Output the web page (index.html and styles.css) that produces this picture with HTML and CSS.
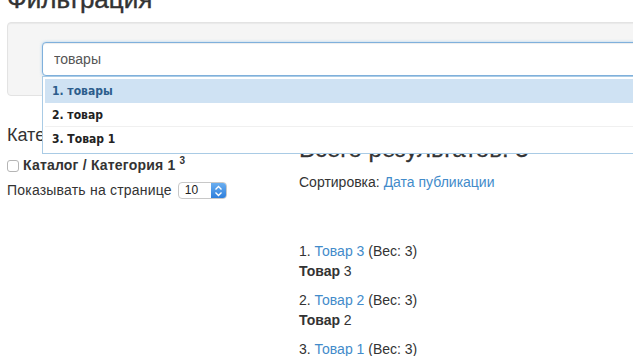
FILE: index.html
```html
<!DOCTYPE html>
<html lang="ru">
<head>
    <meta charset="UTF-8">
    <meta name="viewport" content="width=device-width, initial-scale=1.0">
    <title>Фильтрация</title>
    <link rel="stylesheet" href="styles.css">
</head>
<body>
    <div class="page">
        <h2 class="page-title">Фильтрация</h2>

        <div class="well">
            <div class="search">
                <input type="text" class="search-input" value="товары">
                <ul class="suggest">
                    <li class="active">1. товары</li>
                    <li>2. товар</li>
                    <li>3. Товар 1</li>
                </ul>
            </div>
        </div>

        <div class="row">
            <div class="sidebar">
                <h4>Категории</h4>
                <label class="check">
                    <span class="check-box"></span>
                    <b>Каталог / Категория 1</b> <sup>3</sup>
                </label>
                <div class="per-page">
                    Показывать на странице
                    <span class="select">
                        <span class="select-value">10</span>
                        <span class="select-arrow">
                            <svg width="9" height="12" viewBox="0 0 9 12">
                                <path d="M1.5 4.5 L4.5 1.5 L7.5 4.5 M1.5 7.5 L4.5 10.5 L7.5 7.5" fill="none" stroke="#fff" stroke-width="1.4"/>
                            </svg>
                        </span>
                    </span>
                </div>
            </div>

            <div class="results">
                <h3>Всего результатов: 3</h3>
                <p class="sort">Сортировка: <a href="#">Дата публикации</a></p>

                <div class="result">1. <a href="#">Товар 3</a> (Вес: 3)<br><b>Товар</b> 3</div>
                <div class="result">2. <a href="#">Товар 2</a> (Вес: 3)<br><b>Товар</b> 2</div>
                <div class="result">3. <a href="#">Товар 1</a> (Вес: 3)<br><b>Товар</b> 1</div>
            </div>
        </div>
    </div>
</body>
</html>
```

FILE: styles.css
```css
body {
    margin: 0;
    font-family: "Liberation Sans", Arial, sans-serif;
    font-size: 14px;
    line-height: 20px;
    color: #333;
    background: #fff;
    overflow: hidden;
}

a {
    color: #428bca;
    text-decoration: none;
}

.page {
    width: 760px;
    padding-left: 7px;
}

.page-title {
    font-size: 26px;
    line-height: 30px;
    font-weight: normal;
    -webkit-text-stroke: 0.4px #333;
    margin: -16px 0 8px;
}

.well {
    background: #f5f5f5;
    border: 1px solid #e3e3e3;
    border-radius: 4px;
    box-shadow: inset 0 1px 1px rgba(0,0,0,0.05);
    padding: 19px 0 19px 34px;
    margin-bottom: 19px;
}

.search {
    position: relative;
    width: 680px;
}

.search-input {
    display: block;
    box-sizing: border-box;
    width: 100%;
    height: 34px;
    padding: 6px 11px;
    font-family: "Liberation Sans", Arial, sans-serif;
    font-size: 14px;
    color: #555;
    background: #fff;
    border: 1px solid #7fb0dc;
    border-radius: 4px;
    box-shadow: inset 0 1px 1px rgba(0,0,0,0.075), 0 0 3px rgba(102,175,233,0.5);
    outline: none;
}

.suggest {
    position: absolute;
    top: 34px;
    left: 0;
    right: 0;
    z-index: 10;
    list-style: none;
    margin: 0;
    padding: 2px;
    background: #fff;
    border: 1px solid #a9cbe5;
    font-family: "DejaVu Sans", sans-serif;
    font-stretch: condensed;
    font-size: 12px;
    font-weight: bold;
    color: #222;
}

.suggest li {
    box-sizing: border-box;
    height: 24px;
    line-height: 24px;
    padding-left: 7px;
    border-bottom: 1px solid #f0f0f0;
}

.suggest li:last-child {
    border-bottom: none;
}

.suggest li.active {
    background: #cfe2f3;
    color: #2c5d8c;
    border-bottom-color: #cfe2f3;
}

.row {
    display: grid;
    grid-template-columns: 292px 1fr;
}

.sidebar h4 {
    font-size: 18px;
    line-height: 20px;
    font-weight: normal;
    margin: 10px 0 10px;
}

.check {
    display: flex;
    align-items: center;
    height: 20px;
}

.check-box {
    box-sizing: border-box;
    width: 12px;
    height: 12px;
    border: 1px solid #b5b5b5;
    border-radius: 3px;
    background: #fff;
    margin-right: 4px;
    margin-top: 1px;
}

.check b {
    letter-spacing: 0.2px;
}

.check sup {
    font-size: 10px;
    font-weight: bold;
    line-height: 0;
    margin-left: 4px;
    position: relative;
    top: -4px;
}

.per-page {
    display: flex;
    align-items: center;
    margin-top: 5px;
    height: 20px;
    letter-spacing: 0.2px;
}

.select {
    display: inline-flex;
    box-sizing: border-box;
    width: 49px;
    height: 17px;
    margin-left: 6px;
    margin-top: 1px;
    border: 1px solid #c8c8c8;
    border-radius: 4px;
    background: #fff;
    overflow: hidden;
    letter-spacing: 0;
}

.select-value {
    flex: 1;
    font-size: 12px;
    line-height: 15px;
    padding-left: 6px;
    color: #222;
}

.select-arrow {
    display: flex;
    align-items: center;
    justify-content: center;
    width: 15px;
    background: linear-gradient(#6aaef0, #2e7fdc);
}

.results h3 {
    font-size: 24px;
    line-height: 26px;
    font-weight: normal;
    -webkit-text-stroke: 0.3px #333;
    margin: 21px 0 10px;
}

.sort {
    margin: 0 0 50px;
}

.result {
    line-height: 19.5px;
    margin-bottom: 10px;
}
```
